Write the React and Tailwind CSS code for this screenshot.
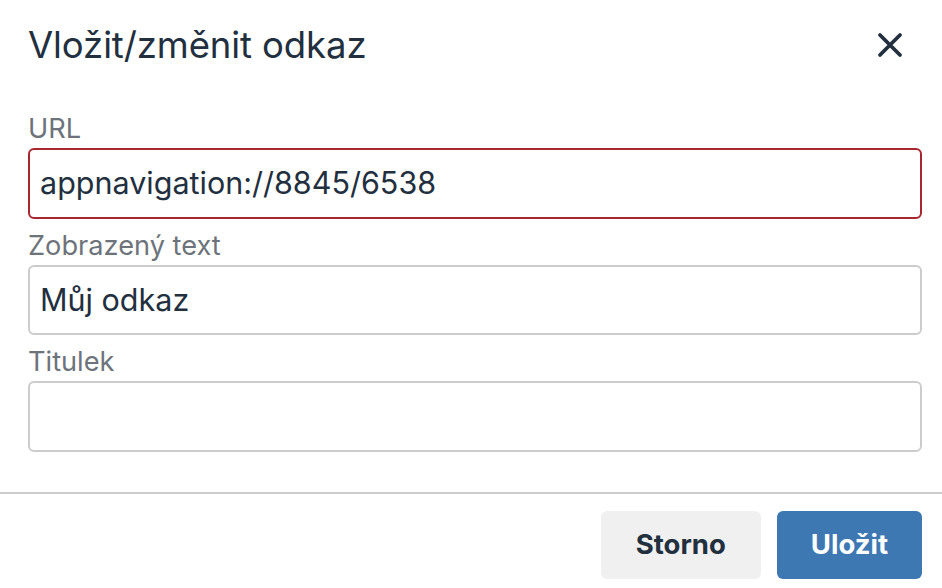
export default function App() {
  return (
    <div className="h-[588px] w-full overflow-hidden bg-white font-['Inter',sans-serif] text-[#222f3e]">
      {/* Hlavička */}
      <div className="flex items-start justify-between pl-[28px] pr-[39px] pt-[24px]">
        <h1 className="text-[36.5px] font-normal leading-[42px] tracking-[-0.1px]">Vložit/změnit odkaz</h1>
        <button className="mt-[8px] flex h-[26px] w-[26px] items-center justify-center" aria-label="Zavřít">
          <svg width="26" height="26" viewBox="0 0 26 26" fill="none">
            <path d="M3 3L23 23M23 3L3 23" stroke="#222f3e" strokeWidth="3.8" strokeLinecap="round" />
          </svg>
        </button>
      </div>

      {/* Formulář */}
      <div className="flex flex-col gap-[12px] pl-[28px] pr-[20px] pt-[48px] pb-[40px]">
        <Field label="URL" value="appnavigation://8845/6538" invalid />
        <Field label="Zobrazený text" value="Můj odkaz" />
        <Field label="Titulek" value="" />
      </div>

      <div className="border-t-2 border-[#cccccc]" />

      {/* Patička */}
      <div className="flex justify-end gap-[16px] px-[20px] pt-[17px]">
        <button className="h-[68px] rounded-[6px] bg-[#f0f0f0] px-[35px] text-[27.5px] font-bold text-[#222f3e]">
          Storno
        </button>
        <button className="h-[68px] rounded-[6px] bg-[#3d78b3] px-[34px] text-[27.5px] font-bold text-white">
          Uložit
        </button>
      </div>
    </div>
  )
}

function Field({ label, value, invalid }) {
  return (
    <div className="flex flex-col gap-[5px]">
      <label className="text-[27.2px] leading-[29px] text-[#6d737b]">{label}</label>
      <div
        className={`flex h-[70.5px] items-center rounded-[6px] border-2 bg-white px-[10px] text-[30.5px] ${
          invalid ? 'border-[#a8262f]' : 'border-[#cccccc]'
        }`}
      >
        {value}
      </div>
    </div>
  )
}
